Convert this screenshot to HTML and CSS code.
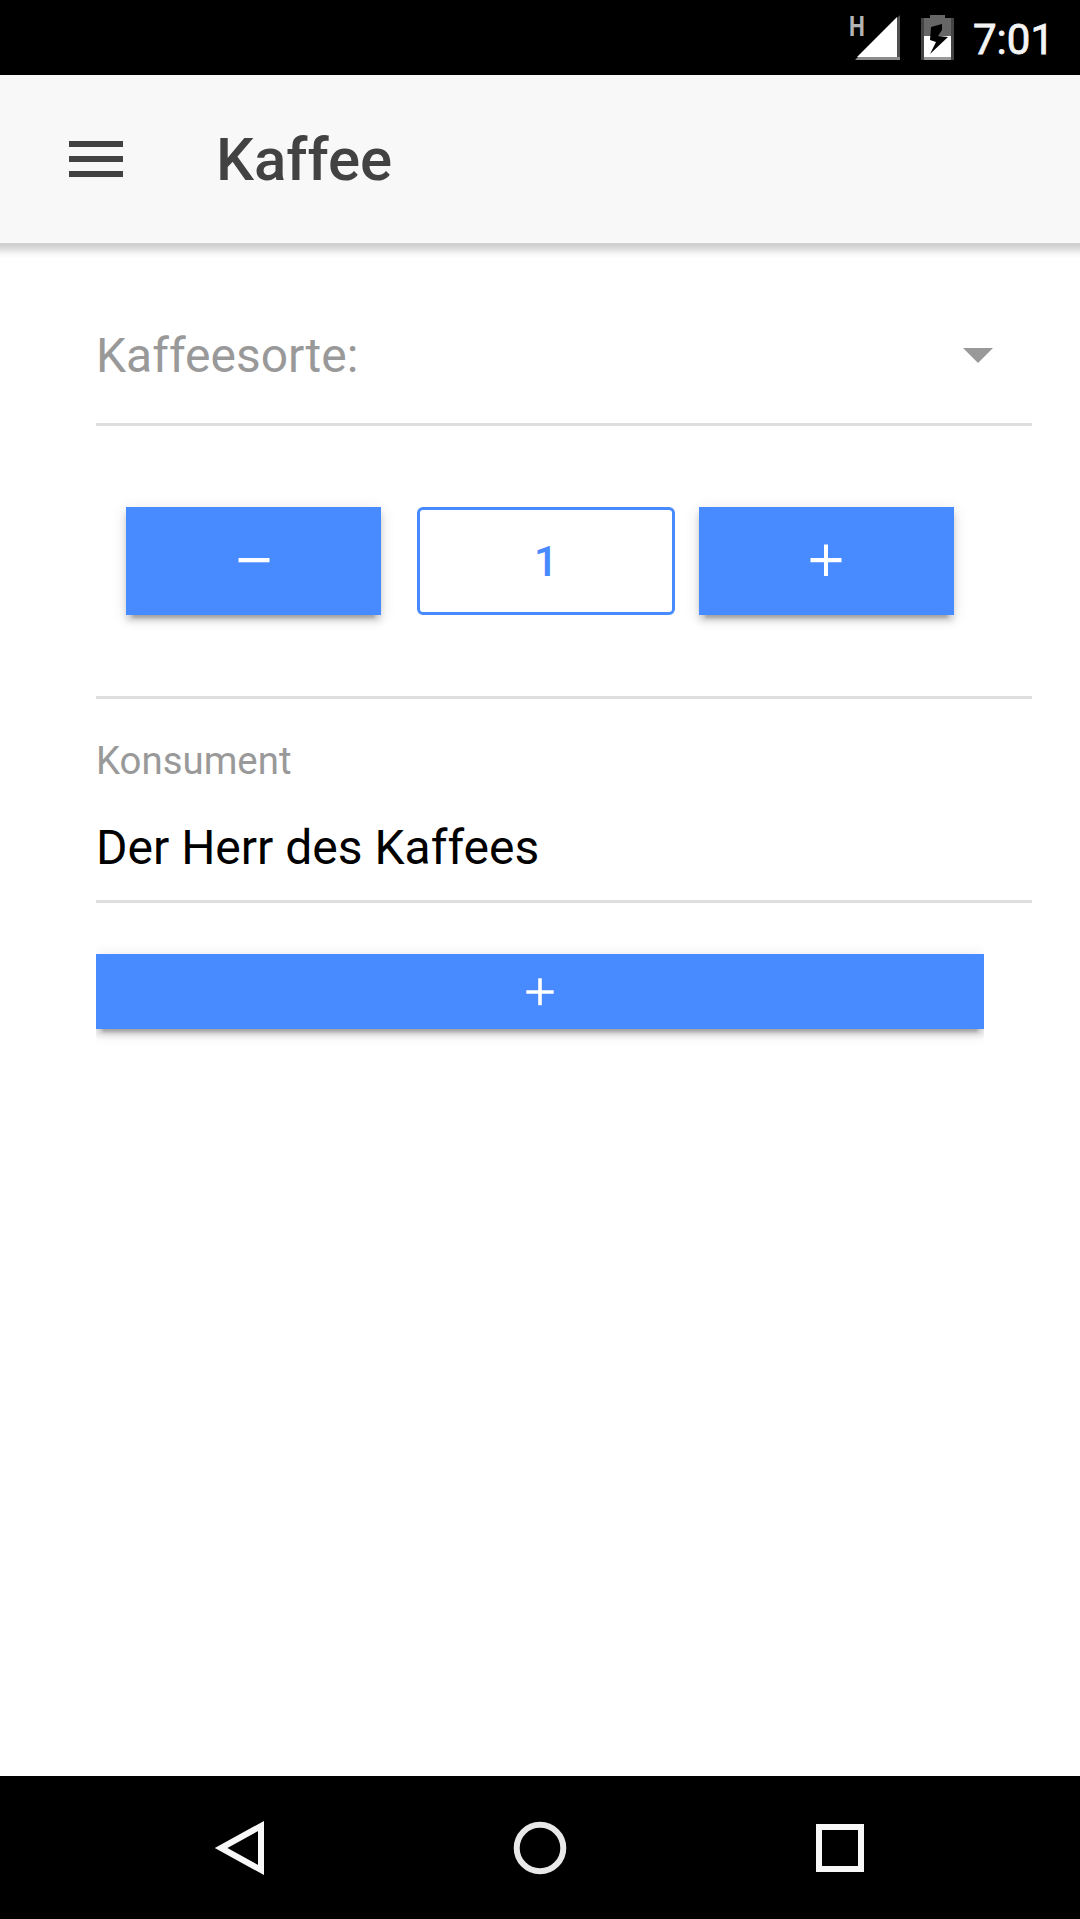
FILE: index.html
```html
<!DOCTYPE html>
<html lang="de">
<head>
<meta charset="utf-8">
<title>Kaffee</title>
<link rel="stylesheet" href="styles.css">
</head>
<body>
<div class="statusbar">
  <div class="signal">
    <span class="network">H</span>
    <svg width="45" height="45" viewBox="0 0 45 45"><path fill="#8c8c8c" d="M0 45 3 42H45V45Z"/><path fill="#505050" d="M42 3 45 0V42H42Z"/><path fill="#fff" d="M2 42 42 2V42Z"/></svg>
  </div>
  <svg class="battery" width="33" height="45" viewBox="0 0 33 45">
    <path fill="#666" d="M9 0H24V3H30V21H3V3H9Z"/>
    <path fill="#444" d="M0 3H3V45H0ZM30 3H33V45H30Z"/>
    <path fill="#999" d="M3 42H30V45H3Z"/>
    <path fill="#fff" d="M3 21H30V42H3Z"/>
    <path fill="#000" d="M10 12 21 9 21 15 17 21 27 22 9 39 15 27 9 25Z"/>
  </svg>
  <span class="clock">7:01</span>
</div>
<header class="toolbar">
  <button class="menu" aria-label="Menü"><i></i><i></i><i></i></button>
  <h1 class="title">Kaffee</h1>
</header>
<main class="content">
  <div class="item select">
    <span class="label">Kaffeesorte:</span>
    <svg class="arrow" width="30" height="15" viewBox="0 0 30 15"><path d="M0 0H30L15 15Z"/></svg>
  </div>
  <div class="item counter">
    <button class="btn step minus" aria-label="Weniger"><svg width="32" height="32" viewBox="0 0 32 32"><path d="M0.5 14H31.5V18.3H0.5Z"/></svg></button>
    <span class="amount">1</span>
    <button class="btn step plus" aria-label="Mehr"><svg width="32" height="32" viewBox="0 0 32 32"><path d="M.5 14H14V.5H18V14H31.5V18.3H18V32H14V18.3H.5Z"/></svg></button>
  </div>
  <div class="item consumer">
    <span class="caption">Konsument</span>
    <span class="value">Der Herr des Kaffees</span>
  </div>
  <button class="btn add" aria-label="Hinzufügen"><svg width="28" height="28" viewBox="0 0 28 28"><path d="M.3 12.2H12.2V.3H15.8V12.2H27.7V15.8H15.8V27.3H12.2V15.8H.3Z"/></svg></button>
</main>
<nav class="navbar">
  <svg class="nav-icon" width="60" height="60" viewBox="0 0 60 60"><path d="M51 8V52L11 30Z"/></svg>
  <svg class="nav-icon circle" width="60" height="60" viewBox="0 0 60 60"><circle cx="30" cy="30" r="23.3"/></svg>
  <svg class="nav-icon" width="60" height="60" viewBox="0 0 60 60"><rect x="9" y="9" width="42" height="42"/></svg>
</nav>
</body>
</html>
```
FILE: styles.css
```css
* { box-sizing: border-box; }
body {
  margin: 0;
  height: 1919px;
  display: flex;
  flex-direction: column;
  background: #fff;
  color: #000;
  font-family: Roboto, "Liberation Sans", sans-serif;
}
svg { display: block; flex: none; }
button { border: 0; padding: 0; margin: 0; background: none; }

.statusbar {
  height: 75px;
  padding: 15px 25px 0 849px;
  display: flex;
  align-items: flex-start;
  background: #000;
  color: #fff;
}
.signal { display: flex; width: 72px; }
.network {
  width: 6px;
  font-size: 28px;
  line-height: 23px;
  font-weight: 700;
  color: #b4b4b4;
  transform: scaleX(.8);
  transform-origin: left;
}
.battery { margin-right: 19px; }
.clock {
  font-size: 42px;
  line-height: 50px;
  color: #f4f4f4;
  -webkit-text-stroke: .8px #f4f4f4;
}

.toolbar {
  position: relative;
  height: 168px;
  padding: 0 69px;
  display: flex;
  align-items: center;
  background: #f8f8f8;
}
.toolbar::after {
  content: "";
  position: absolute;
  left: 0;
  right: 0;
  top: 100%;
  height: 15px;
  background: linear-gradient(#d2d2d2, #cecece 12%, #e2e2e2 45%, #f7f7f7 75%, #fff);
}
.menu { display: flex; flex-direction: column; gap: 9px; width: 54px; }
.menu i { height: 6px; background: #424242; }
.title {
  margin: 2px 0 0 93px;
  font-size: 60px;
  line-height: 72px;
  font-weight: 500;
  color: #424242;
}

.content { flex: 1; padding: 48px 48px 0 96px; }
.item { border-bottom: 3px solid #dedede; }
.select {
  height: 135px;
  padding: 0 39px 2px 0;
  display: flex;
  align-items: center;
  justify-content: space-between;
  color: #999;
}
.label { font-size: 48px; line-height: 56px; }
.arrow { fill: #999; margin-top: -2px; }

.counter {
  height: 273px;
  padding: 81px 0 0 30px;
  display: flex;
  align-items: flex-start;
}
.btn {
  display: flex;
  align-items: center;
  justify-content: center;
  background: #488aff;
  fill: #fff;
  box-shadow: 0 9px 3px -6px rgba(0,0,0,.2), 0 6px 6px rgba(0,0,0,.14), 0 3px 15px rgba(0,0,0,.12);
}
.step { width: 255px; height: 108px; padding-bottom: 2px; }
.plus { padding-right: 1px; }
.amount {
  width: 258px;
  height: 108px;
  margin: 0 24px 0 36px;
  border: 3px solid #488aff;
  border-radius: 6px;
  font-size: 42px;
  line-height: 104px;
  font-weight: 500;
  text-align: center;
  color: #488aff;
}

.consumer {
  height: 204px;
  padding-top: 39px;
  display: flex;
  flex-direction: column;
}
.caption { font-size: 38.4px; line-height: 45px; color: #999; }
.value { margin-top: 37px; font-size: 48px; line-height: 56px; }
.add {
  width: 888px;
  height: 75px;
  margin-top: 51px;
  clip-path: inset(-9px 0 -30px);
}

.navbar {
  height: 143px;
  padding: 42px 210px 0;
  display: flex;
  justify-content: space-between;
  background: #000;
}
.nav-icon { fill: none; stroke: #f8f8f8; stroke-width: 6; }
.circle { stroke: #e8e8e8; }
```
